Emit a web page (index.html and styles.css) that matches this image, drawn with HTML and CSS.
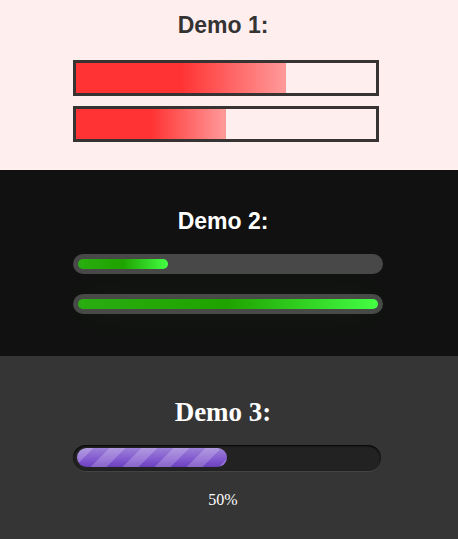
FILE: index.html
```html
<!DOCTYPE html>
<html>
<head>
<meta charset="utf-8">
<link rel="stylesheet" href="styles.css">
</head>
<body>
  <section class="demo demo1">
    <div class="wrap">
      <h2 class="title">Demo 1:</h2>
      <div class="box-bar"><div class="box-fill" style="width:70%"></div></div>
      <div class="box-bar"><div class="box-fill" style="width:50%"></div></div>
    </div>
  </section>
  <section class="demo demo2">
    <div class="wrap">
      <h2 class="title">Demo 2:</h2>
      <div class="pill-bar"><div class="pill-fill" style="width:30%"></div></div>
      <div class="pill-bar"><div class="pill-fill glow" style="width:100%"></div></div>
    </div>
  </section>
  <section class="demo demo3">
    <div class="wrap">
      <h2 class="title serif">Demo 3:</h2>
      <div class="stripe-bar"><div class="stripe-fill" style="width:50%"></div></div>
      <div class="pct">50%</div>
    </div>
  </section>
</body>
</html>
```
FILE: styles.css
```css
html, body {
  margin: 0;
  padding: 0;
}
body {
  font-family: "Liberation Sans", Arial, sans-serif;
  width: 458px;
  overflow: hidden;
}
.demo {
  display: flex;
  flex-direction: column;
}
.wrap {
  width: 300px;
  margin: 0 auto;
  padding-right: 12px;
  display: flex;
  flex-direction: column;
}
.title {
  margin: 0;
  text-align: center;
  font-size: 23px;
  line-height: 26px;
  font-weight: bold;
}

/* Demo 1 */
.demo1 {
  background: #ffeeee;
  height: 170px;
  box-sizing: border-box;
  padding-top: 12px;
}
.demo1 .title {
  color: #333;
  margin-bottom: 22px;
}
.box-bar {
  width: 300px;
  height: 30px;
  border: 3px solid #373333;
  background: #ffeeee;
  margin-bottom: 10px;
}
.box-fill {
  height: 100%;
  background: linear-gradient(to right, #ff3333 50%, #ff9a9a 100%);
}

/* Demo 2 */
.demo2 {
  background: #111111;
  height: 186px;
  box-sizing: border-box;
  padding-top: 38px;
}
.demo2 .title {
  color: #fff;
  margin-bottom: 20px;
}
.pill-bar {
  width: 300px;
  padding: 5px;
  border-radius: 10px;
  background: #484848;
  margin-bottom: 20px;
}
.pill-fill {
  height: 10px;
  border-radius: 5px;
  background: linear-gradient(to right, #2aad10 0%, #1fa300 50%, #44ff44 100%);
}
.pill-fill.glow {
  box-shadow: 0 0 40px 4px rgba(68, 255, 68, 0.06);
}

/* Demo 3 */
.demo3 {
  background: #353535;
  height: 183px;
  box-sizing: border-box;
  padding-top: 42px;
}
.title.serif {
  font-family: "Liberation Serif", Georgia, serif;
  font-size: 27px;
  line-height: 28px;
  color: #fff;
  margin-bottom: 19px;
}
.stripe-bar {
  width: 300px;
  padding: 3px 4px 4px;
  border-radius: 13px;
  background: #222;
  box-shadow: inset 0 1px 2px #000, 0 1px 0 #444;
}
.stripe-fill {
  height: 19px;
  border-radius: 10px;
  background-image:
    linear-gradient(135deg,
      rgba(255,255,255,0.2) 25%, transparent 25%,
      transparent 50%, rgba(255,255,255,0.2) 50%,
      rgba(255,255,255,0.2) 75%, transparent 75%, transparent),
    linear-gradient(to bottom, #9c80d8 0%, #8259cf 60%, #6a40bd 100%);
  background-size: 32px 32px, 100% 100%;
}
.pct {
  margin-top: 20px;
  text-align: center;
  font-family: "Liberation Serif", Georgia, serif;
  font-size: 16px;
  line-height: 18px;
  color: #fff;
}
```
